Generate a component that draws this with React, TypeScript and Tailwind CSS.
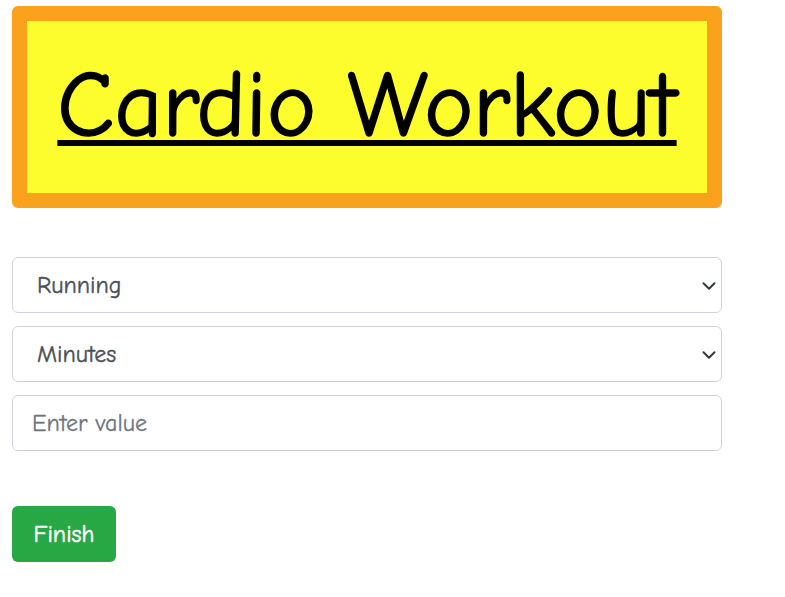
export default function App() {
  const font = { fontFamily: '"Comic Neue", "Comic Sans MS", "Open Sans", sans-serif' }
  return (
    <div className="bg-white min-h-[597px] px-3 pt-[6px]" style={font}>
      <div className="w-[710px] h-[202px] rounded-md border-[15px] border-[#faa21c] bg-[#fdfd2d] flex items-center justify-center">
        <h1 className="text-[93px] leading-none text-black underline decoration-[6px] underline-offset-[4px] pb-[4px] [-webkit-text-stroke:1.5px_black]">
          Cardio Workout
        </h1>
      </div>

      <div className="mt-[49px] w-[710px] flex flex-col gap-[13px]">
        <div className="relative">
          <select className="appearance-none w-full h-[56px] rounded-md border border-[#ced4da] bg-white pl-[24px] text-[24px] text-[#495057] [-webkit-text-stroke:0.4px_#495057]" style={font}>
            <option>Running</option>
          </select>
          <Chevron />
        </div>
        <div className="relative">
          <select className="appearance-none w-full h-[56px] rounded-md border border-[#ced4da] bg-white pl-[24px] text-[24px] text-[#495057] [-webkit-text-stroke:0.4px_#495057]" style={font}>
            <option>Minutes</option>
          </select>
          <Chevron />
        </div>
        <input
          className="w-full h-[56px] rounded-md border border-[#ced4da] bg-white px-[19px] text-[24px] text-[#495057] placeholder:text-[#6c757d] outline-none [-webkit-text-stroke:0.3px_#6c757d]"
          style={font}
          placeholder="Enter value"
        />
      </div>

      <button
        className="mt-[55px] h-[56px] w-[104px] rounded-md bg-[#28a745] text-white text-[24px] [-webkit-text-stroke:0.5px_white]"
        style={font}
      >
        Finish
      </button>
    </div>
  )
}

function Chevron() {
  return (
    <svg
      className="absolute right-[6px] top-[25px] pointer-events-none"
      width="14"
      height="8"
      viewBox="0 0 14 8"
      fill="none"
      stroke="#343a40"
      strokeWidth="2"
      strokeLinecap="round"
      strokeLinejoin="round"
    >
      <path d="M1.5 1.2l5.5 5.5 5.5-5.5" />
    </svg>
  )
}
